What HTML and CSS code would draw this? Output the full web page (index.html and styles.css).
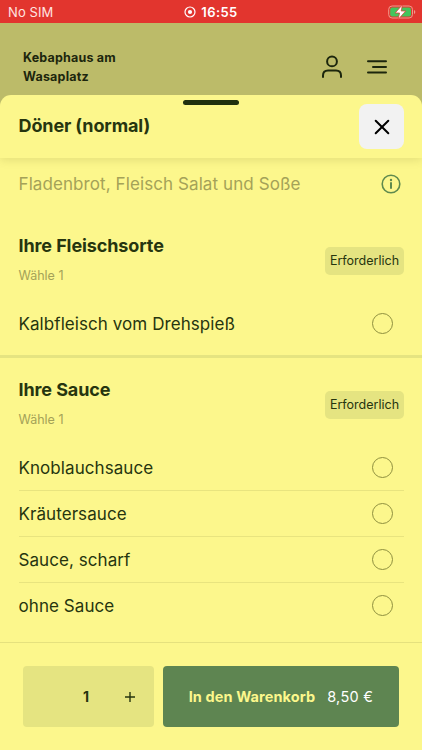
FILE: index.html
```html
<!DOCTYPE html>
<html lang="de">
<head>
  <meta charset="UTF-8" />
  <meta name="viewport" content="width=device-width, initial-scale=1.0" />
  <title>Kebaphaus am Wasaplatz</title>
  <link rel="stylesheet" href="styles.css">
</head>
<body>
  <div class="status-bar">
    <span class="carrier">No SIM</span>
    <span class="clock">
      <svg width="12" height="12" viewBox="0 0 12 12"><circle cx="6" cy="6" r="5" fill="none" stroke="#fff" stroke-width="1.2"/><circle cx="6" cy="6" r="2.1" fill="#fff"/></svg>
      <span class="time">16:55</span>
    </span>
    <svg class="battery" width="28" height="16" viewBox="0 0 28 16">
      <rect x="0.7" y="2" width="23.8" height="12" rx="3.4" fill="none" stroke="#f09a8c" stroke-width="1"/>
      <rect x="2.2" y="3.5" width="20.8" height="9" rx="2" fill="#43c45c"/>
      <path d="M26 6v4q1.3-.6 1.3-2T26 6z" fill="#f09a8c"/>
      <path d="M14.4 .8L7.2 9h4.4l-1.5 6.4L17.7 7h-4.5z" fill="#fff" stroke="#e2352e" stroke-width="0.7"/>
    </svg>
  </div>

  <header class="shop-header">
    <div class="shop-name">Kebaphaus am<br>Wasaplatz</div>
    <div class="shop-icons">
      <svg width="22" height="24" viewBox="0 0 22 24" fill="none" stroke="#1c260d" stroke-width="2" stroke-linecap="round"><circle cx="11" cy="6.4" r="4.9"/><path d="M2 22v-1.5q0-5 5-5h8q5 0 5 5V22"/></svg>
      <svg width="22" height="24" viewBox="0 0 22 24" fill="none" stroke="#1c260d" stroke-width="2" stroke-linecap="round"><path d="M2 6.3h18M7 12h13M2 17.6h18"/></svg>
    </div>
  </header>

  <main class="sheet">
    <div class="sheet-header">
      <span class="handle"></span>
      <h1>Döner (normal)</h1>
      <button class="close" aria-label="Schließen">
        <svg width="16" height="16" viewBox="0 0 16 16" stroke="#000" stroke-width="2" stroke-linecap="round"><path d="M1.7 1.7l12.6 12.6M14.3 1.7L1.7 14.3"/></svg>
      </button>
    </div>

    <div class="description">
      <span>Fladenbrot, Fleisch Salat und Soße</span>
      <svg width="20" height="20" viewBox="0 0 20 20" fill="none" stroke="#5f8a4e"><circle cx="10" cy="10" r="8.8" stroke-width="1.6"/><path d="M10 9v5" stroke-width="2" stroke-linecap="round"/><circle cx="10" cy="6" r="1.2" fill="#5f8a4e" stroke="none"/></svg>
    </div>

    <section class="group">
      <div class="group-head">
        <div>
          <h2>Ihre Fleischsorte</h2>
          <p>Wähle 1</p>
        </div>
        <span class="badge">Erforderlich</span>
      </div>
      <div class="option"><span>Kalbfleisch vom Drehspieß</span><i class="radio"></i></div>
    </section>

    <section class="group">
      <div class="group-head">
        <div>
          <h2>Ihre Sauce</h2>
          <p>Wähle 1</p>
        </div>
        <span class="badge">Erforderlich</span>
      </div>
      <div class="option"><span>Knoblauchsauce</span><i class="radio"></i></div>
      <div class="option"><span>Kräutersauce</span><i class="radio"></i></div>
      <div class="option"><span>Sauce, scharf</span><i class="radio"></i></div>
      <div class="option"><span>ohne Sauce</span><i class="radio"></i></div>
    </section>

    <footer class="cart-bar">
      <div class="quantity">
        <span></span>
        <b>1</b>
        <svg width="10" height="10" viewBox="0 0 10 10" stroke="#26350f" stroke-width="1.4"><path d="M5 0v10M0 5h10"/></svg>
      </div>
      <button class="add"><b>In den Warenkorb</b><span>8,50 €</span></button>
    </footer>
  </main>
</body>
</html>
```

FILE: styles.css
```css
:root {
  --bg: #fcf78c;
  --muted-bg: #e5e481;
  --text: #26350f;
  --green: #5e8551;
}
* { box-sizing: border-box; }
body {
  margin: 0;
  height: 750px;
  display: flex;
  flex-direction: column;
  overflow: hidden;
  font-family: Inter, "Liberation Sans", sans-serif;
  background: #bcbb69;
  color: var(--text);
}
h1, h2, p { margin: 0; }
button { border: none; padding: 0; font-family: inherit; }
svg { display: block; flex: none; }

.status-bar {
  display: grid;
  grid-template-columns: 1fr auto 1fr;
  align-items: center;
  height: 23px;
  padding: 1px 6px 0 8px;
  background: #e2352e;
  color: #fff;
}
.carrier { font-size: 13px; letter-spacing: 0.1px; color: #ffe4e0; }
.clock { display: flex; align-items: center; gap: 5px; margin-left: -2px; }
.time { font-size: 13px; font-weight: 600; letter-spacing: 0.4px; }
.battery { justify-self: end; }

.shop-header {
  display: flex;
  justify-content: space-between;
  height: 72px;
  padding: 25px 34px 0 23px;
}
.shop-name { font-size: 12.5px; line-height: 19px; font-weight: 650; letter-spacing: 0.2px; color: #1c260d; }
.shop-icons { display: flex; gap: 23px; padding-top: 7px; }

.sheet {
  flex: 1;
  display: flex;
  flex-direction: column;
  background: var(--bg);
  border-radius: 11px 11px 0 0;
}
.sheet-header {
  position: relative;
  display: flex;
  justify-content: space-between;
  height: 63px;
  padding: 9px 18px 0 18.5px;
  box-shadow: 0 3px 8px rgba(90, 90, 20, 0.13);
  clip-path: inset(0 0 -12px 0);
}
.handle {
  position: absolute;
  top: 5px;
  left: 183px;
  width: 56px;
  height: 5px;
  border-radius: 3px;
  background: #20300f;
}
h1 { font-size: 18px; line-height: 44px; font-weight: 700; letter-spacing: -0.12px; }
.close {
  display: flex;
  align-items: center;
  justify-content: center;
  width: 45px;
  height: 45px;
  border-radius: 8px;
  background: #f2f2f2;
}
.description {
  display: flex;
  align-items: center;
  justify-content: space-between;
  height: 56px;
  padding: 0 21px 4px 18.5px;
  font-size: 17px;
  letter-spacing: 0.09px;
  color: #a4a258;
}

.group { padding: 0 18px 0 18.5px; }
.group + .group { border-top: 3px solid var(--muted-bg); }
.group:first-of-type { padding-bottom: 9px; }
.group-head {
  display: flex;
  align-items: flex-start;
  justify-content: space-between;
  height: 86px;
  padding-top: 19px;
}
h2 { padding-top: 1px; font-size: 18px; line-height: 24px; font-weight: 700; letter-spacing: -0.1px; }
.group-head p { margin-top: 9px; font-size: 12.5px; line-height: 18px; color: #a4a258; }
.badge {
  width: 79px;
  margin-top: 14px;
  border-radius: 5px;
  background: var(--muted-bg);
  font-size: 12.5px;
  line-height: 28px;
  text-align: center;
}
.option {
  display: flex;
  align-items: center;
  justify-content: space-between;
  height: 46px;
  padding-right: 11.5px;
  font-size: 17px;
  letter-spacing: 0.07px;
}
.option > span { padding-top: 1px; }
.option + .option { border-top: 1px solid #e8e47f; }
.option + .option > span { padding-top: 0; }
.radio { width: 21px; height: 21px; border: 1px solid #8f903f; border-radius: 50%; }

.cart-bar {
  display: flex;
  gap: 9px;
  margin-top: auto;
  height: 108px;
  padding: 23px 23px;
  border-top: 1px solid #e5e17e;
}
.quantity {
  display: grid;
  grid-template-columns: 42px 42px 46px;
  align-items: center;
  justify-items: center;
  width: 131px;
  height: 61px;
  border-radius: 4px;
  background: var(--muted-bg);
  font-size: 14px;
}
.quantity b { padding-bottom: 1px; }
.add {
  flex: 1;
  display: flex;
  align-items: center;
  justify-content: center;
  gap: 12px;
  height: 61px;
  padding-bottom: 1px;
  border-radius: 4px;
  background: var(--green);
  color: #fff;
  font-size: 14.5px;
  letter-spacing: 0.1px;
}
.add span { letter-spacing: 0.3px; }
.add b { color: var(--bg); }
```
